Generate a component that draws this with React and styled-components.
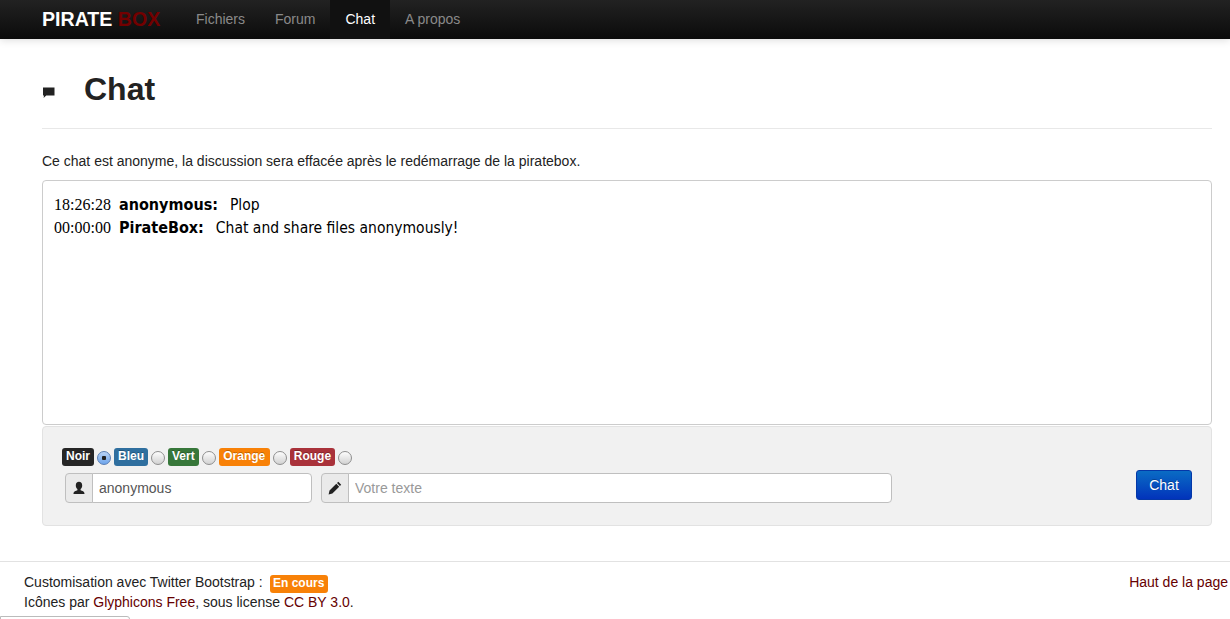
import React from "react";
import styled, { createGlobalStyle } from "styled-components";

const GlobalStyle = createGlobalStyle`
  html, body {
    margin: 0;
    height: 619px;
    overflow: hidden;
    background: #fff;
  }
  body {
    font-family: "Liberation Sans", Arial, sans-serif;
    font-size: 14px;
    line-height: 20px;
    color: #222;
  }
  * {
    box-sizing: border-box;
  }
`;

const CommentIcon = () => (
  <svg width="14" height="14" viewBox="0 0 14 14">
    <path d="M1 2.500h11.500v8H4.200L1.600 13l.4-2.500H1z" fill="#222" />
  </svg>
);

const UserIcon = () => (
  <svg width="14" height="14" viewBox="0 0 14 14">
    <path
      d="M7 .8c2 0 3.200 1.400 3.200 3.600 0 1.700-.8 3-1.600 3.600v1.200c1.500.5 3.900.9 3.900 3.800h-11c0-2.900 2.400-3.300 3.900-3.800V8C4.600 7.400 3.800 6.100 3.800 4.400 3.800 2.200 5 .8 7 .8z"
      fill="#222"
    />
  </svg>
);

const PencilIcon = () => (
  <svg width="14" height="14" viewBox="0 0 14 14">
    <path d="M10.300.8l2.900 2.900-1.300 1.300L9 2.100zM8.300 2.800l2.900 2.900-6.800 6.800L.6 13.400l.9-3.800z" fill="#222" />
  </svg>
);

const colours = [
  { name: "Noir", bg: "#262626", pad: 4, checked: true },
  { name: "Bleu", bg: "#2f6f9f", pad: 4, checked: false },
  { name: "Vert", bg: "#37773a", pad: 4, checked: false },
  { name: "Orange", bg: "#f88107", pad: 4.5, checked: false },
  { name: "Rouge", bg: "#a9323a", pad: 4, checked: false },
];

const App = () => {
  return (
    <>
      <GlobalStyle />
      <Navbar>
        <Brand>
          PIRATE <BrandRed>BOX</BrandRed>
        </Brand>
        <NavItem href="#">Fichiers</NavItem>
        <NavItem href="#">Forum</NavItem>
        <NavItem href="#" $active>
          Chat
        </NavItem>
        <NavItem href="#">A propos</NavItem>
      </Navbar>
      <Main>
        <PageHeader>
          <HeaderIcon>
            <CommentIcon />
          </HeaderIcon>
          <Title>Chat</Title>
        </PageHeader>
        <Intro>Ce chat est anonyme, la discussion sera effacée après le redémarrage de la piratebox.</Intro>
        <ChatBox>
          <Message>
            <Time>18:26:28</Time>
            <Author>anonymous:</Author>
            <Body>Plop</Body>
          </Message>
          <Message>
            <Time>00:00:00</Time>
            <Author>PirateBox:</Author>
            <Body>Chat and share files anonymously!</Body>
          </Message>
        </ChatBox>
        <Well>
          <Fields>
            <ColourRow>
              {colours.map((c) => (
                <React.Fragment key={c.name}>
                  <Badge $bg={c.bg} $pad={c.pad}>
                    {c.name}
                  </Badge>
                  <Radio type="radio" name="color" defaultChecked={c.checked} />
                </React.Fragment>
              ))}
            </ColourRow>
            <InputRow>
              <InputGroup $width="247px">
                <AddOn>
                  <UserIcon />
                </AddOn>
                <TextInput defaultValue="anonymous" />
              </InputGroup>
              <InputGroup $width="571px">
                <AddOn>
                  <PencilIcon />
                </AddOn>
                <TextInput placeholder="Votre texte" />
              </InputGroup>
            </InputRow>
          </Fields>
          <SendButton>Chat</SendButton>
        </Well>
      </Main>
      <Footer>
        <div>
          <FooterLine>
            Customisation avec Twitter Bootstrap : <FooterBadge>En cours</FooterBadge>
          </FooterLine>
          <FooterLine>
            Icônes par <FooterLink href="#">Glyphicons Free</FooterLink>, sous license{" "}
            <FooterLink href="#">CC BY 3.0</FooterLink>.
          </FooterLine>
        </div>
        <FooterLink href="#">Haut de la page</FooterLink>
      </Footer>
      <BottomTab />
    </>
  );
};

export default App;

const Navbar = styled.nav`
  display: flex;
  align-items: stretch;
  height: 39px;
  padding-left: 42px;
  background: linear-gradient(to bottom, #222222, #0b0b0b);
  box-shadow: 0 1px 8px rgba(0, 0, 0, 0.15);
`;

const Brand = styled.a`
  width: 139px;
  font-size: 19.6px;
  font-weight: 700;
  line-height: 38px;
  color: #fff;
  white-space: pre;
`;

const BrandRed = styled.span`
  color: #730000;
`;

const NavItem = styled.a`
  padding: 0 15px;
  line-height: 38px;
  color: ${(p) => (p.$active ? "#fff" : "#8a8a8a")};
  background: ${(p) => (p.$active ? "#111" : "transparent")};
  text-decoration: none;
`;

const Main = styled.main`
  padding: 0 18px 0 42px;
`;

const PageHeader = styled.header`
  display: flex;
  align-items: center;
  height: 90px;
  padding-top: 10px;
  border-bottom: 1px solid #e8e8e8;
`;

const HeaderIcon = styled.span`
  display: flex;
  width: 42px;
  padding-top: 7px;
`;

const Title = styled.h1`
  margin: 0;
  font-size: 32px;
  line-height: 40px;
  font-weight: 700;
  color: #222;
`;

const Intro = styled.p`
  margin: 22px 0 9px;
  color: #222;
`;

const ChatBox = styled.div`
  height: 245px;
  padding: 12px 11px;
  background: #fff;
  border: 1px solid #ccc;
  border-radius: 4px;
  color: #000;
`;

const Message = styled.div`
  display: flex;
  align-items: baseline;
  height: 23px;
  line-height: 23px;
`;

const Time = styled.span`
  width: 57px;
  margin-right: 8px;
  font-family: "Liberation Serif", "Times New Roman", serif;
  font-size: 16px;
  white-space: nowrap;
`;

const Author = styled.b`
  margin-right: 12px;
  font-family: "DejaVu Sans", Verdana, sans-serif;
  font-size: 16px;
  font-stretch: condensed;
  white-space: nowrap;
`;

const Body = styled.span`
  font-family: "DejaVu Sans", Verdana, sans-serif;
  font-size: 15.5px;
  font-stretch: condensed;
  white-space: nowrap;
`;

const Well = styled.form`
  display: flex;
  justify-content: space-between;
  height: 100px;
  margin-top: 1px;
  padding: 19px;
  background: #f1f1f1;
  border: 1px solid #e2e2e2;
  border-radius: 4px;
`;

const Fields = styled.div`
  display: flex;
  flex-direction: column;
  gap: 7px;
  padding-top: 1px;
`;

const ColourRow = styled.div`
  display: flex;
  align-items: center;
  height: 19px;
`;

const Badge = styled.span`
  height: 18px;
  padding: 0 ${(p) => p.$pad}px;
  font-size: 12px;
  line-height: 17px;
  font-weight: 700;
  color: #fff;
  background: ${(p) => p.$bg};
  border-radius: 3px;
  text-shadow: 0 -1px 0 rgba(0, 0, 0, 0.25);
`;

const Radio = styled.input`
  appearance: none;
  width: 14px;
  height: 14px;
  margin: 3px 3px 0 3px;
  background: linear-gradient(to bottom, #fdfdfd, #d2d2d2);
  border: 1px solid #8f8f8f;
  border-radius: 50%;

  &:checked {
    background: radial-gradient(circle, #222 0 2px, transparent 2.5px),
      linear-gradient(to bottom, #b9d3f5, #6ea5ec);
    border-color: #5a7fb5;
  }
`;

const InputRow = styled.div`
  display: flex;
  gap: 9px;
  padding-left: 3px;
`;

const InputGroup = styled.div`
  display: flex;
  width: ${(p) => p.$width};
  height: 30px;
`;

const AddOn = styled.span`
  display: flex;
  align-items: center;
  justify-content: center;
  width: 28px;
  background: #eaeaea;
  border: 1px solid #bfbfbf;
  border-radius: 4px 0 0 4px;
`;

const TextInput = styled.input`
  flex: 1;
  min-width: 0;
  margin-left: -1px;
  padding: 0 6px;
  font-family: "Liberation Sans", Arial, sans-serif;
  font-size: 14px;
  color: #555;
  background: #fff;
  border: 1px solid #bfbfbf;
  border-radius: 0 4px 4px 0;
  outline: none;

  &::placeholder {
    color: #999;
  }
`;

const SendButton = styled.button`
  align-self: flex-start;
  width: 56px;
  height: 30px;
  margin-top: 24px;
  padding: 0;
  font-family: "Liberation Sans", Arial, sans-serif;
  font-size: 14px;
  color: #fff;
  background: linear-gradient(to bottom, #0a6cc4, #0233bb);
  border: 1px solid #0437a8;
  border-radius: 3px;
  text-shadow: 0 -1px 0 rgba(0, 0, 0, 0.25);
`;

const Footer = styled.footer`
  display: flex;
  justify-content: space-between;
  height: 55px;
  margin-top: 35px;
  padding: 10px 2px 0 24px;
  border-top: 1px solid #e2e2e2;
  color: #222;
`;

const FooterLine = styled.div`
  height: 20px;
`;

const FooterBadge = styled.span`
  display: inline-block;
  height: 18px;
  margin-left: 3px;
  padding: 0 3.5px;
  font-size: 12px;
  line-height: 17px;
  font-weight: 700;
  color: #fff;
  background: #f88107;
  border-radius: 3px;
`;

const FooterLink = styled.a`
  color: #660000;
  text-decoration: none;
`;

const BottomTab = styled.div`
  width: 130px;
  height: 10px;
  background: #fff;
  border: 1px solid #bbb;
  border-radius: 0 3px 0 0;
`;
